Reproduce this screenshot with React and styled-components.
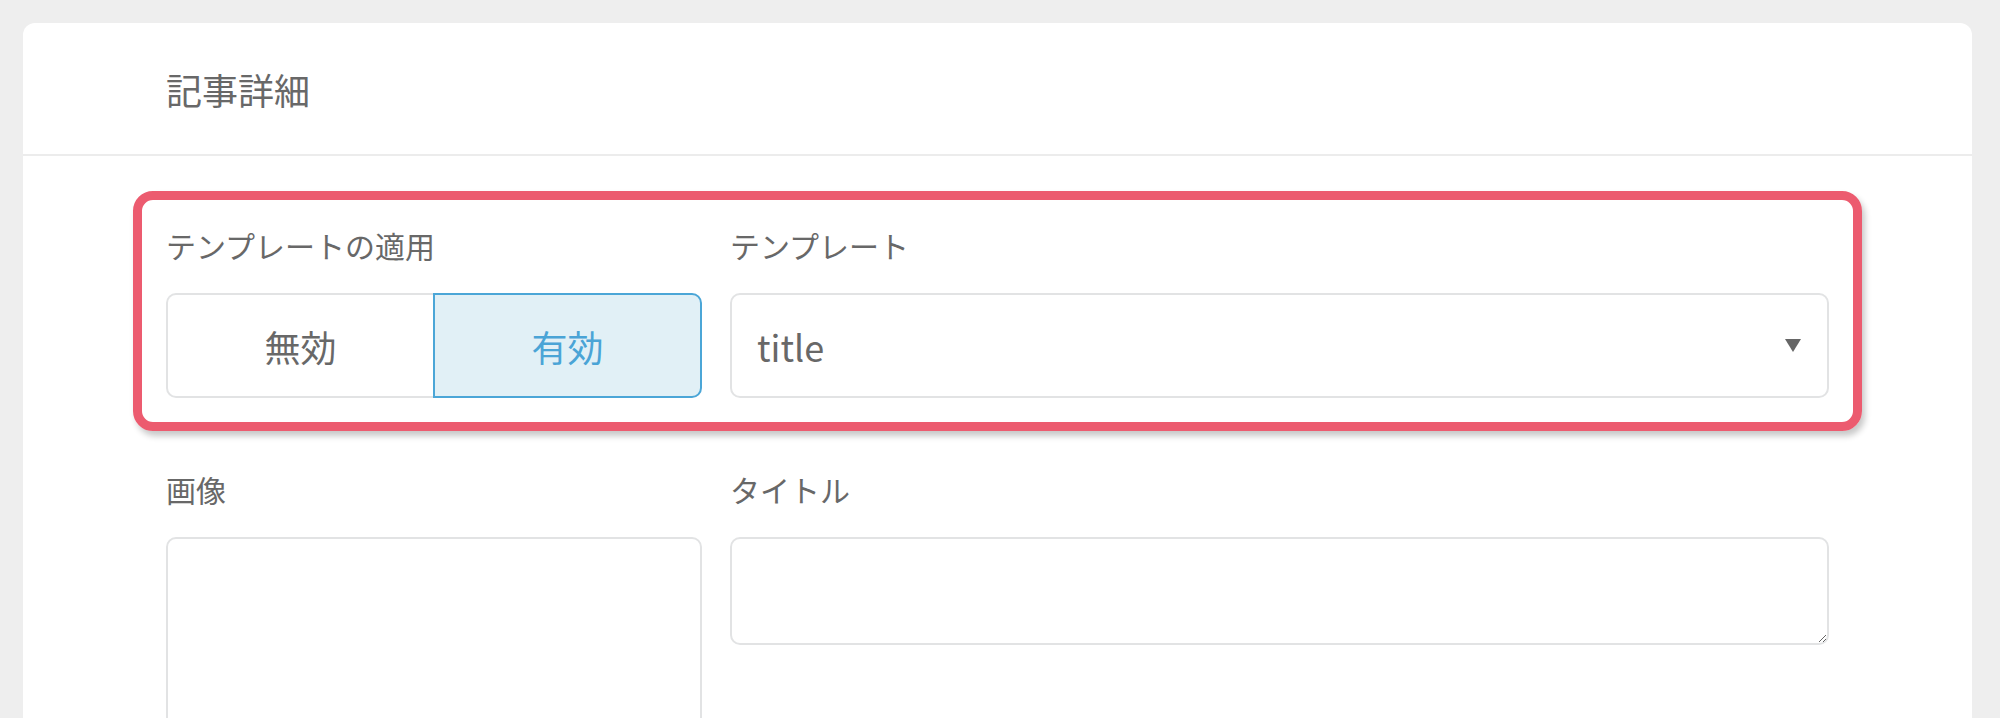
import React from "react";
import styled, { createGlobalStyle } from "styled-components";

const GlobalStyle = createGlobalStyle`
  html, body {
    margin: 0;
    padding: 0;
    background: #eeeeee;
    overflow: hidden;
  }
  body {
    font-family: "Noto Sans CJK JP", "Noto Sans", sans-serif;
    color: #686868;
  }
  * { box-sizing: border-box; }
`;

const Page = styled.div`
  padding: 23px 28px 0 23px;
  height: 718px;
`;

const Card = styled.section`
  background: #ffffff;
  border-radius: 12px 12px 0 0;
  height: 100%;
  overflow: hidden;
`;

const CardHeader = styled.header`
  height: 133px;
  display: flex;
  align-items: center;
  padding-left: 143px;
  border-bottom: 2px solid #ececec;
`;

const Title = styled.h2`
  margin: 0;
  font-size: 36px;
  font-weight: 400;
  color: #686868;
  line-height: 1;
`;

const CardBody = styled.div`
  padding: 35px 143px 0 143px;
`;

const Highlight = styled.div`
  margin: 0 -33px;
  border: 9px solid #ec5b6f;
  border-radius: 20px;
  padding: 23px 24px 24px;
  box-shadow: 3px 5px 6px rgba(0, 0, 0, 0.22);
`;

const Row = styled.div`
  display: grid;
  grid-template-columns: 536px 1fr;
  column-gap: 28px;
  margin-top: ${(p) => p.$top || 0}px;
`;

const Field = styled.div`
  display: flex;
  flex-direction: column;
  min-width: 0;
`;

const Label = styled.div`
  font-size: 30px;
  line-height: 45px;
  color: #686868;
  margin-bottom: 25px;
  margin-top: ${(p) => p.$top || 0}px;
`;

const Segmented = styled.div`
  display: flex;
  height: 105px;
`;

const Segment = styled.button`
  flex: 1;
  font-family: inherit;
  font-size: 36px;
  cursor: pointer;
  background: ${(p) => (p.$active ? "#e1f0f6" : "#ffffff")};
  color: ${(p) => (p.$active ? "#4aa4d6" : "#686868")};
  border: 2px solid ${(p) => (p.$active ? "#4ba6d7" : "#e2e3e4")};
  border-radius: ${(p) => (p.$first ? "10px 0 0 10px" : "0 10px 10px 0")};
  ${(p) => (p.$first ? "border-right: none;" : "")}
  padding: 0;
`;

const Select = styled.div`
  height: 105px;
  display: flex;
  align-items: center;
  justify-content: space-between;
  padding: 0 26px 0 25px;
  border: 2px solid #e2e3e4;
  border-radius: 10px;
  font-size: 36px;
  color: #686868;
`;

const ImageBox = styled.div`
  height: 320px;
  border: 2px solid #e2e3e4;
  border-radius: 10px;
`;

const TextArea = styled.textarea`
  display: block;
  width: 100%;
  height: 108px;
  border: 2px solid #e2e3e4;
  border-radius: 10px;
  font-family: inherit;
  font-size: 30px;
  color: #686868;
  padding: 16px 24px;
  resize: vertical;
  outline: none;
`;

const Caret = () => (
  <svg width="16" height="13" viewBox="0 0 16 13" aria-hidden="true">
    <path d="M0 0 H16 L8 13 Z" fill="#666666" />
  </svg>
);

export default function App() {
  return (
    <>
      <GlobalStyle />
      <Page>
        <Card>
          <CardHeader>
            <Title>記事詳細</Title>
          </CardHeader>
          <CardBody>
            <Highlight>
              <Row>
                <Field>
                  <Label>テンプレートの適用</Label>
                  <Segmented>
                    <Segment $first>無効</Segment>
                    <Segment $active>有効</Segment>
                  </Segmented>
                </Field>
                <Field>
                  <Label>テンプレート</Label>
                  <Select>
                    <span>title</span>
                    <Caret />
                  </Select>
                </Field>
              </Row>
            </Highlight>
            <Row $top={36}>
              <Field>
                <Label>画像</Label>
                <ImageBox />
              </Field>
              <Field>
                <Label>タイトル</Label>
                <TextArea />
                <Label $top={65}>説明</Label>
              </Field>
            </Row>
          </CardBody>
        </Card>
      </Page>
    </>
  );
}
